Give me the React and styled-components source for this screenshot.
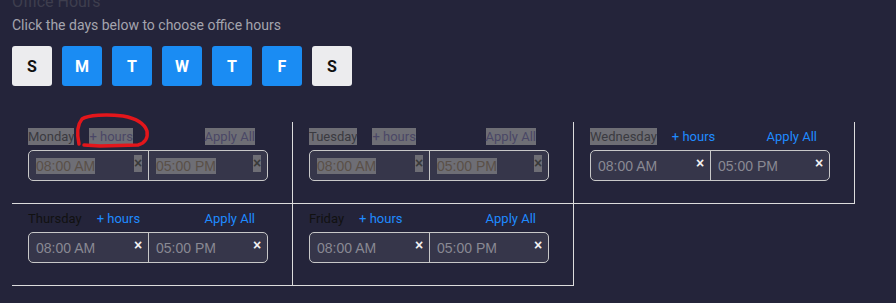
import React from 'react'
import styled, { createGlobalStyle } from 'styled-components'

const GlobalStyle = createGlobalStyle`
  html, body {
    margin: 0;
    background: #24243a;
    font-family: Roboto, "Liberation Sans", Arial, sans-serif;
    overflow: hidden;
  }
`

const SELECT_BG = '#6e6e75'

const Page = styled.div`
  padding: 0 12px;
`

const Title = styled.h3`
  margin: -8px 0 0;
  font-size: 16px;
  font-weight: 400;
  line-height: 19px;
  color: #3e3e4e;
`

const Subtitle = styled.p`
  margin: 6px 0 0;
  font-size: 14px;
  line-height: 16px;
  color: #a4a4ae;
`

const DayRow = styled.div`
  display: flex;
  gap: 10px;
  margin-top: 13px;
`

const DayButton = styled.button`
  width: 40px;
  height: 40px;
  border: none;
  border-radius: 3px;
  padding: 0;
  font-family: Roboto, sans-serif;
  font-size: 16px;
  font-weight: 700;
  background: ${(p) => (p.$active ? '#1a8cf3' : '#ececee')};
  color: ${(p) => (p.$active ? '#ffffff' : '#111111')};
  cursor: pointer;
`

const Grid = styled.div`
  display: grid;
  grid-template-columns: repeat(3, 281px);
  margin-top: 36px;
`

const Cell = styled.div`
  box-sizing: border-box;
  height: 82px;
  padding: 5px 16px 0;
  border-right: 1px solid #dcdcdc;
  border-bottom: 1px solid #dcdcdc;
`

const LabelRow = styled.div`
  display: flex;
  align-items: center;
  width: 240px;
  height: 18px;
  font-size: 13px;
`

const DayName = styled.span`
  color: ${(p) => (p.$selected ? '#3a3a40' : '#111111')};
  background: ${(p) => (p.$selected ? SELECT_BG : 'transparent')};
  line-height: 17px;
`

const LinkText = styled.span`
  position: relative;
  color: ${(p) => (p.$selected ? '#4a4766' : '#1f8bff')};
  background: ${(p) => (p.$selected ? SELECT_BG : 'transparent')};
  line-height: 17px;
  cursor: pointer;
`

const AddHours = styled(LinkText)`
  margin-left: 15px;
`

const ApplyAll = styled(LinkText)`
  margin-left: auto;
  margin-right: 13px;
`

const Scribble = styled.svg`
  position: absolute;
  left: -13px;
  top: -16px;
  overflow: visible;
  pointer-events: none;
`

const InputGroup = styled.div`
  box-sizing: border-box;
  display: flex;
  width: 240px;
  height: 31px;
  margin-top: 5px;
  border: 1px solid #c8c8c8;
  border-radius: 5px;
  background: #36364a;
  font-family: "Liberation Sans", Arial, sans-serif;
`

const TimeHalf = styled.div`
  box-sizing: border-box;
  display: flex;
  align-items: center;
  width: ${(p) => (p.$first ? '120px' : '118px')};
  padding: 0 6px 0 7px;
  border-right: ${(p) => (p.$first ? '1px solid #c8c8c8' : 'none')};
`

const TimeText = styled.span`
  font-size: 14px;
  line-height: 16px;
  color: ${(p) => (p.$selected ? '#5a5048' : '#898993')};
  background: ${(p) => (p.$selected ? SELECT_BG : 'transparent')};
`

const Clear = styled.span`
  margin-left: auto;
  align-self: flex-start;
  margin-top: 4px;
  width: 8px;
  text-align: center;
  font-size: 14px;
  line-height: 17px;
  font-weight: 700;
  color: ${(p) => (p.$selected ? '#3a3a3a' : '#f2f2f2')};
  background: ${(p) => (p.$selected ? SELECT_BG : 'transparent')};
  cursor: pointer;
`

const week = [
  { letter: 'S', active: false },
  { letter: 'M', active: true },
  { letter: 'T', active: true },
  { letter: 'W', active: true },
  { letter: 'T', active: true },
  { letter: 'F', active: true },
  { letter: 'S', active: false },
]

const schedule = [
  { name: 'Monday', label: true, all: true, circled: true },
  { name: 'Tuesday', label: true, all: true },
  { name: 'Wednesday', label: true, all: false },
  { name: 'Thursday', label: false, all: false },
  { name: 'Friday', label: false, all: false },
]

const DayCell = ({ day }) => (
  <Cell>
    <LabelRow>
      <DayName $selected={day.label}>{day.name}</DayName>
      <AddHours $selected={day.all}>
        + hours
        {day.circled && (
          <Scribble width="76" height="38" viewBox="0 0 76 38">
            <path
              d="M3 32 C1 23 1 13 6 7 C12 3 30 2 47 4 C58 6 68 10 71 19 C72 25 70 31 62 33 L24 34 L8 33"
              fill="none"
              stroke="#e3161b"
              strokeWidth="3.5"
              strokeLinecap="round"
              strokeLinejoin="round"
            />
          </Scribble>
        )}
      </AddHours>
      <ApplyAll $selected={day.all}>Apply All</ApplyAll>
    </LabelRow>
    <InputGroup>
      <TimeHalf $first>
        <TimeText $selected={day.all}>08:00 AM</TimeText>
        <Clear $selected={day.all}>×</Clear>
      </TimeHalf>
      <TimeHalf>
        <TimeText $selected={day.all}>05:00 PM</TimeText>
        <Clear $selected={day.all}>×</Clear>
      </TimeHalf>
    </InputGroup>
  </Cell>
)

const App = () => (
  <Page>
    <GlobalStyle />
    <Title>Office Hours</Title>
    <Subtitle>Click the days below to choose office hours</Subtitle>
    <DayRow>
      {week.map((d, i) => (
        <DayButton key={i} $active={d.active}>
          {d.letter}
        </DayButton>
      ))}
    </DayRow>
    <Grid>
      {schedule.map((day) => (
        <DayCell key={day.name} day={day} />
      ))}
    </Grid>
  </Page>
)

export default App
